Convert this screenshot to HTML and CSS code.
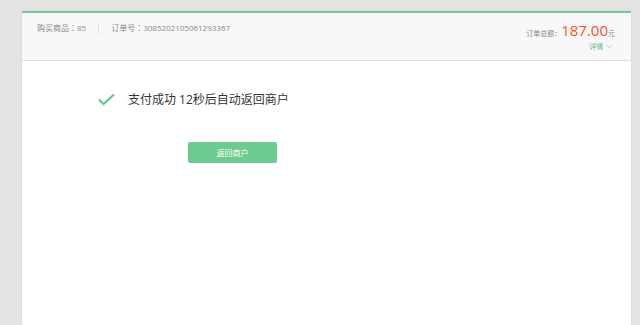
FILE: index.html
```html
<!DOCTYPE html>
<html>
<head>
  <title>支付成功</title>
  <meta charset="utf-8">
  <link rel="stylesheet" href="styles.css">
</head>
<body>
  <div class="card">

    <div class="header">
      <div class="header-left">
        <span class="info">购买商品：85</span>
        <span class="sep"></span>
        <span class="info">订单号：3085202105061293367</span>
      </div>
      <div class="header-right">
        <div class="total">
          <span class="label">订单总额：</span><span class="amount">187.00</span><span class="unit">元</span>
        </div>
        <div class="detail">详情
          <svg width="7" height="5" viewBox="0 0 7 5"><polyline points="0.5,0.8 3.5,3.8 6.5,0.8" fill="none" stroke="#9fd6b5" stroke-width="1"/></svg>
        </div>
      </div>
    </div>

    <div class="main">
      <div class="status">
        <svg class="check" width="17" height="13" viewBox="0 0 17 13"><polyline points="1,6.5 5.5,11 16,1.5" fill="none" stroke="#6cc592" stroke-width="2.2"/></svg>
        <span class="status-text">支付成功 12秒后自动返回商户</span>
      </div>
      <button class="back" type="button">返回商户</button>
    </div>

  </div>
</body>
</html>
```

FILE: styles.css
```css
body {
  margin: 0;
  background: #e4e4e4;
  font-family: "Open Sans", "Noto Sans CJK SC", sans-serif;
  overflow: hidden;
}
.card {
  margin: 11px 9px 0 22px;
  height: 312px;
  background: #fff;
  border-top: 2px solid #74c99b;
  box-shadow: 0 0 3px rgba(0, 0, 0, 0.08);
}
.header {
  display: flex;
  justify-content: space-between;
  height: 47px;
  background: #f8f8f8;
  border-bottom: 1px dotted #c8c8c8;
}
.header-left {
  display: flex;
  align-items: flex-start;
  padding: 10px 0 0 15px;
}
.info {
  font-family: "Open Sans", "Noto Sans CJK TC", sans-serif;
  font-size: 8px;
  line-height: 10px;
  color: #8a8a8a;
}
.sep {
  width: 1px;
  height: 10px;
  background: #e2e2e2;
  margin: 1px 12px 0 12px;
}
.header-right {
  padding: 8px 16px 0 0;
  text-align: right;
}
.total {
  line-height: 18px;
}
.label {
  font-size: 7px;
  color: #8a8a8a;
}
.amount {
  font-size: 15px;
  color: #f0582c;
}
.unit {
  font-size: 7px;
  color: #8a8a8a;
}
.detail {
  font-size: 7px;
  line-height: 8px;
  color: #5fbf86;
  padding-right: 2px;
}
.detail svg {
  margin-left: 1px;
}
.main {
  padding: 29px 0 0 76px;
}
.status {
  display: flex;
  align-items: center;
}
.check {
  margin-right: 13px;
}
.status-text {
  font-size: 12px;
  color: #333;
}
.back {
  margin: 34px 0 0 90px;
  width: 89px;
  height: 21px;
  border: none;
  border-radius: 2px;
  background: #6ccb8f;
  color: #fff;
  font-family: "Noto Sans CJK SC", sans-serif;
  font-size: 8px;
  padding: 0;
}
```
